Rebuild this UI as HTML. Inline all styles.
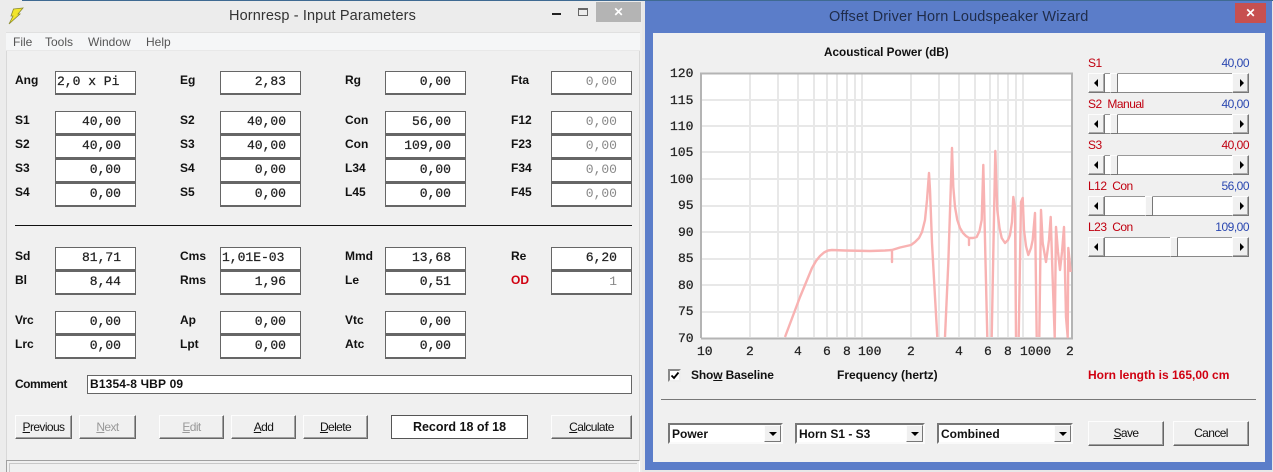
<!DOCTYPE html>
<html><head><meta charset="utf-8"><style>
html,body{margin:0;padding:0}
body{width:1273px;height:472px;position:relative;overflow:hidden;background:#e8e8e8;font-family:"Liberation Sans",sans-serif}
div,span.a{position:absolute;box-sizing:border-box;white-space:pre}
.l{font:bold 12px/14px "Liberation Sans",sans-serif;color:#111;height:14px}
.f{width:81px;height:24px;background:#fff;border:1px solid #666;border-bottom-width:2px;font:13px/20px "Liberation Mono",monospace;color:#222;text-align:right;padding-right:14px;-webkit-text-stroke:.25px #222}
.d{color:#888;-webkit-text-stroke:0}
.t{text-align:left;padding:0 0 0 1px}
.b{height:24px;background:#f0f0f0;border:1px solid;border-color:#fdfdfd #666 #666 #fdfdfd;box-shadow:inset -1px -1px 0 #a0a0a0;font:12px/22px "Liberation Sans",sans-serif;letter-spacing:-.6px;text-align:center;color:#111}
.g{color:#999}
.n{font:13px/15px "Liberation Mono",monospace;color:#222;-webkit-text-stroke:.25px #222;height:15px}
.r{font:12px/14px "Liberation Sans",sans-serif;letter-spacing:-.5px;color:#c00010;left:1088px}
.v{font:12px/14px "Liberation Sans",sans-serif;letter-spacing:-.5px;color:#2a47b0;right:24px;text-align:right}
.s{left:1088px;width:161px;height:20px;background:#fff;border-top:1px solid #999;border-bottom:1px solid #888}
.ar{top:-1px;width:17px;height:20px;background:#f0f0f0;border:1px solid;border-color:#fdfdfd #777 #777 #fdfdfd;box-shadow:inset -1px -1px 0 #aaa}
.th{top:-1px;width:8px;height:20px;background:#f0f0f0;border:1px solid;border-color:#fdfdfd #777 #777 #fdfdfd}
.tl,.tr{width:0;height:0;top:5px;border:4px solid transparent}
.tl{left:5px;border-right:4px solid #000;border-left:0}
.tr{left:7px;border-left:4px solid #000;border-right:0}
.dd{height:21px;background:#fff;border:2px solid;border-color:#777 #fafafa #fafafa #777;font:bold 12px/18px "Liberation Sans",sans-serif;color:#111;padding-left:2px}
.dd div.x{right:0;top:0;width:17px;height:17px;background:#f0f0f0;border:1px solid;border-color:#fdfdfd #777 #777 #fdfdfd}
.dd div.x div{left:4px;top:6px;width:0;height:0;border:4px solid transparent;border-top:4px solid #000;border-bottom:0}
u{text-decoration:underline}
</style></head><body>

<!-- LEFT WINDOW -->
<div style="left:0;top:0;width:642px;height:472px;background:#ececec"></div>
<div style="left:22px;top:0;width:1251px;height:1px;background:#3f6a92"></div>
<div style="left:6px;top:32px;width:634px;height:440px;background:#f0f0f0;border-left:1px solid #d8d8d8;border-right:1px solid #d8d8d8"></div>
<div style="left:6px;top:32px;width:634px;height:19px;background:#f5f6f7;border-top:1px solid #e0e0e0;border-bottom:1px solid #e8e8e8"></div>
<svg style="position:absolute;left:8px;top:7px" width="17" height="18" viewBox="0 0 17 18"><path d="M5.5 2L15 1L10 7L12 7L1 17L5 9L3 9Z" fill="#f2e528" stroke="#8a8a30" stroke-width=".8"/></svg>
<div style="left:229px;top:8px;font-size:14.5px;line-height:17px;color:#333;width:190px;letter-spacing:.12px">Hornresp - Input Parameters</div>
<div style="left:552px;top:13px;width:9px;height:2px;background:#222"></div>
<div style="left:578px;top:8px;width:10px;height:8px;border:1px solid #666;border-top-width:2px"></div>
<div style="left:596px;top:2px;width:45px;height:20px;background:#b4b4b4;color:#fff;font:bold 12px/20px 'Liberation Sans',sans-serif;text-align:center">✕</div>
<div style="left:13px;top:35px;font-size:12px;line-height:14px;color:#555">File</div>
<div style="left:45px;top:35px;font-size:12px;line-height:14px;color:#555">Tools</div>
<div style="left:88px;top:35px;font-size:12px;line-height:14px;color:#555">Window</div>
<div style="left:146px;top:35px;font-size:12px;line-height:14px;color:#555">Help</div>

<div class="l" style="left:15px;top:73px">Ang</div><div class="f t" style="left:55px;top:71px">2,0 x Pi</div>
<div class="l" style="left:180px;top:73px">Eg</div><div class="f" style="left:220px;top:71px">2,83</div>
<div class="l" style="left:345px;top:73px">Rg</div><div class="f" style="left:385px;top:71px">0,00</div>
<div class="l" style="left:511px;top:73px">Fta</div><div class="f d" style="left:551px;top:71px">0,00</div>

<div class="l" style="left:15px;top:113px">S1</div><div class="f" style="left:55px;top:111px">40,00</div>
<div class="l" style="left:180px;top:113px">S2</div><div class="f" style="left:220px;top:111px">40,00</div>
<div class="l" style="left:345px;top:113px">Con</div><div class="f" style="left:385px;top:111px">56,00</div>
<div class="l" style="left:511px;top:113px">F12</div><div class="f d" style="left:551px;top:111px">0,00</div>

<div class="l" style="left:15px;top:137px">S2</div><div class="f" style="left:55px;top:135px">40,00</div>
<div class="l" style="left:180px;top:137px">S3</div><div class="f" style="left:220px;top:135px">40,00</div>
<div class="l" style="left:345px;top:137px">Con</div><div class="f" style="left:385px;top:135px">109,00</div>
<div class="l" style="left:511px;top:137px">F23</div><div class="f d" style="left:551px;top:135px">0,00</div>

<div class="l" style="left:15px;top:161px">S3</div><div class="f" style="left:55px;top:159px">0,00</div>
<div class="l" style="left:180px;top:161px">S4</div><div class="f" style="left:220px;top:159px">0,00</div>
<div class="l" style="left:345px;top:161px">L34</div><div class="f" style="left:385px;top:159px">0,00</div>
<div class="l" style="left:511px;top:161px">F34</div><div class="f d" style="left:551px;top:159px">0,00</div>

<div class="l" style="left:15px;top:185px">S4</div><div class="f" style="left:55px;top:183px">0,00</div>
<div class="l" style="left:180px;top:185px">S5</div><div class="f" style="left:220px;top:183px">0,00</div>
<div class="l" style="left:345px;top:185px">L45</div><div class="f" style="left:385px;top:183px">0,00</div>
<div class="l" style="left:511px;top:185px">F45</div><div class="f d" style="left:551px;top:183px">0,00</div>

<div style="left:15px;top:225px;width:617px;height:1px;background:#111"></div>

<div class="l" style="left:15px;top:249px">Sd</div><div class="f" style="left:55px;top:247px">81,71</div>
<div class="l" style="left:180px;top:249px">Cms</div><div class="f t" style="left:220px;top:247px">1,01E-03</div>
<div class="l" style="left:345px;top:249px">Mmd</div><div class="f" style="left:385px;top:247px">13,68</div>
<div class="l" style="left:511px;top:249px">Re</div><div class="f" style="left:551px;top:247px">6,20</div>

<div class="l" style="left:15px;top:273px">Bl</div><div class="f" style="left:55px;top:271px">8,44</div>
<div class="l" style="left:180px;top:273px">Rms</div><div class="f" style="left:220px;top:271px">1,96</div>
<div class="l" style="left:345px;top:273px">Le</div><div class="f" style="left:385px;top:271px">0,51</div>
<div class="l" style="left:511px;top:273px;color:#d00010">OD</div><div class="f d" style="left:551px;top:271px">1</div>

<div class="l" style="left:15px;top:313px">Vrc</div><div class="f" style="left:55px;top:311px">0,00</div>
<div class="l" style="left:180px;top:313px">Ap</div><div class="f" style="left:220px;top:311px">0,00</div>
<div class="l" style="left:345px;top:313px">Vtc</div><div class="f" style="left:385px;top:311px">0,00</div>

<div class="l" style="left:15px;top:337px">Lrc</div><div class="f" style="left:55px;top:335px">0,00</div>
<div class="l" style="left:180px;top:337px">Lpt</div><div class="f" style="left:220px;top:335px">0,00</div>
<div class="l" style="left:345px;top:337px">Atc</div><div class="f" style="left:385px;top:335px">0,00</div>

<div class="l" style="left:15px;top:377px;letter-spacing:-.5px">Comment</div>
<div style="left:87px;top:375px;width:545px;height:19px;background:#fff;border:1px solid #666;font:bold 12px/17px 'Liberation Sans',sans-serif;letter-spacing:.15px;color:#111;padding-left:2px">B1354-8 ЧВР 09</div>

<div class="b" style="left:15px;top:415px;width:57px"><u>P</u>revious</div>
<div class="b g" style="left:79px;top:415px;width:57px"><u>N</u>ext</div>
<div class="b g" style="left:159px;top:415px;width:65px"><u>E</u>dit</div>
<div class="b" style="left:231px;top:415px;width:65px"><u>A</u>dd</div>
<div class="b" style="left:303px;top:415px;width:65px"><u>D</u>elete</div>
<div style="left:391px;top:415px;width:137px;height:24px;background:#fff;border:1px solid #555;font:bold 12.5px/22px 'Liberation Sans',sans-serif;text-align:center;color:#111">Record 18 of 18</div>
<div class="b" style="left:551px;top:415px;width:81px"><u>C</u>alculate</div>
<div style="left:6px;top:460px;width:634px;height:12px;border-top:1px solid #a0a0a0;border-left:1px solid #a0a0a0;border-right:1px solid #fff"></div>
<div style="left:9px;top:463px;width:628px;height:9px;border-top:1px solid #c8c8c8;border-left:1px solid #c8c8c8"></div>

<!-- RIGHT WINDOW -->
<div style="left:645px;top:1px;width:627px;height:469px;background:#5b7dc9"></div>
<div style="left:653px;top:33px;width:612px;height:429px;background:#f0f0f0"></div>
<div style="left:829px;top:9px;font-size:14.5px;line-height:17px;color:#1f2c4a;letter-spacing:.16px">Offset Driver Horn Loudspeaker Wizard</div>
<div style="left:1235px;top:3px;width:31px;height:20px;background:#c75050;color:#fff;font:bold 12px/20px 'Liberation Sans',sans-serif;text-align:center">✕</div>

<div class="l" style="left:824px;top:46px;font-size:11.75px">Acoustical Power (dB)</div>

<div class="n" style="left:670px;top:66px">120</div>
<div class="n" style="left:670px;top:93px">115</div>
<div class="n" style="left:670px;top:119px">110</div>
<div class="n" style="left:670px;top:145px">105</div>
<div class="n" style="left:670px;top:172px">100</div>
<div class="n" style="left:678px;top:198px">95</div>
<div class="n" style="left:678px;top:225px">90</div>
<div class="n" style="left:678px;top:251px">85</div>
<div class="n" style="left:678px;top:278px">80</div>
<div class="n" style="left:678px;top:304px">75</div>
<div class="n" style="left:678px;top:331px">70</div>

<svg style="position:absolute;left:700px;top:72px" width="374" height="268" viewBox="700 72 374 268">
<rect x="701" y="73" width="371" height="265" fill="#fff"/>
<g stroke="#e8e8e8" stroke-width="2" fill="none">
<path d="M702 100H1071M702 126H1071M702 152H1071M702 179H1071M702 206H1071M702 232H1071M702 259H1071M702 285H1071M702 312H1071"/>
<path d="M750 74V337M778 74V337M798 74V337M814 74V337M827 74V337M837 74V337M847 74V337M855 74V337M862 74V337M911 74V337M939 74V337M959 74V337M975 74V337M990 74V337M998 74V337M1008 74V337M1016 74V337M1023 74V337"/>
</g>
<path d="M701 338V73.5H1072V338.5H701" fill="none" stroke="#b4b4b4" stroke-width="2"/>
<path d="M785 337L800 297L812 268L816 261L820 256L824 252.5L828 250.5L832 250L845 250.5L870 251L885 250.5L892 250V262V250L900 247.5L911 245L915 242L919 238L922 232L925 220L927 200L929 173L930 190L932 243L935 297L937.3 337M945 337L948.3 263L950.7 190L952 148L953.3 187L955 207L957.3 220L960 228L963 233L966 236L969 238V245V238L973 238L976.7 237L979.5 231L981.7 220L983.3 165L985.3 253L987.3 337M991.7 337L994 217L995.3 151L997.3 210L999.5 228L1001.7 238L1005 243L1008 240L1010 235L1012 222L1013.3 197L1015 207L1016 337M1018.7 337L1021 202L1022.7 198L1024 230L1026 246L1028.3 255L1031 248L1032.7 240L1035 213L1036.7 337M1039.3 337L1041 210L1042.7 243L1046 262L1049 240L1050.7 217L1052.7 280L1054.7 337L1056 227L1058 252L1060 270L1062 252L1064 227L1066 317L1067.7 337L1068.3 248L1070.7 272" fill="none" stroke="#f8b2b2" stroke-width="2.4" stroke-linejoin="round"/>
</svg>

<div class="n" style="left:697px;top:344px">10</div>
<div class="n" style="left:746px;top:344px">2</div>
<div class="n" style="left:794px;top:344px">4</div>
<div class="n" style="left:823px;top:344px">6</div>
<div class="n" style="left:843px;top:344px">8</div>
<div class="n" style="left:858px;top:344px">100</div>
<div class="n" style="left:907px;top:344px">2</div>
<div class="n" style="left:955px;top:344px">4</div>
<div class="n" style="left:984px;top:344px">6</div>
<div class="n" style="left:1004px;top:344px">8</div>
<div class="n" style="left:1020px;top:344px">1000</div>
<div class="n" style="left:1066px;top:344px">2</div>

<div style="left:668px;top:369px;width:13px;height:13px;background:#fff;border:2px solid;border-color:#888 #eee #eee #888"></div>
<svg style="position:absolute;left:670px;top:371px" width="10" height="10" viewBox="0 0 10 10"><path d="M1.5 4.5L4 7L8.5 1.5" fill="none" stroke="#000" stroke-width="1.8"/></svg>
<div class="l" style="left:691px;top:368px;letter-spacing:-.15px">Sho<u>w</u> Baseline</div>
<div class="l" style="left:837px;top:368px">Frequency (hertz)</div>
<div class="l" style="left:1088px;top:368px;color:#d00010">Horn length is 165,00 cm</div>

<!-- sliders -->
<div class="r" style="top:56px">S1</div><div class="v" style="top:56px">40,00</div>
<div class="s" style="top:73px"><div class="ar" style="left:0"><div class="tl"></div></div><div class="ar" style="left:144px"><div class="tr"></div></div><div class="th" style="left:22px"></div></div>
<div class="r" style="top:97px">S2&nbsp; Manual</div><div class="v" style="top:97px">40,00</div>
<div class="s" style="top:114px"><div class="ar" style="left:0"><div class="tl"></div></div><div class="ar" style="left:144px"><div class="tr"></div></div><div class="th" style="left:22px"></div></div>
<div class="r" style="top:138px">S3</div><div class="v" style="top:138px;color:#c00010">40,00</div>
<div class="s" style="top:155px"><div class="ar" style="left:0"><div class="tl"></div></div><div class="ar" style="left:144px"><div class="tr"></div></div><div class="th" style="left:22px"></div></div>
<div class="r" style="top:179px">L12&nbsp; Con</div><div class="v" style="top:179px">56,00</div>
<div class="s" style="top:196px"><div class="ar" style="left:0"><div class="tl"></div></div><div class="ar" style="left:144px"><div class="tr"></div></div><div class="th" style="left:57px"></div></div>
<div class="r" style="top:220px">L23&nbsp; Con</div><div class="v" style="top:220px">109,00</div>
<div class="s" style="top:237px"><div class="ar" style="left:0"><div class="tl"></div></div><div class="ar" style="left:144px"><div class="tr"></div></div><div class="th" style="left:82px"></div></div>

<div style="left:661px;top:399px;width:595px;height:1px;background:#777"></div>

<div class="dd" style="left:668px;top:423px;width:115px">Power<div class="x"><div></div></div></div>
<div class="dd" style="left:795px;top:423px;width:130px">Horn S1 - S3<div class="x"><div></div></div></div>
<div class="dd" style="left:937px;top:423px;width:136px">Combined<div class="x"><div></div></div></div>

<div class="b" style="left:1088px;top:421px;width:76px;height:25px;line-height:23px"><u>S</u>ave</div>
<div class="b" style="left:1173px;top:421px;width:76px;height:25px;line-height:23px">Cancel</div>

</body></html>
